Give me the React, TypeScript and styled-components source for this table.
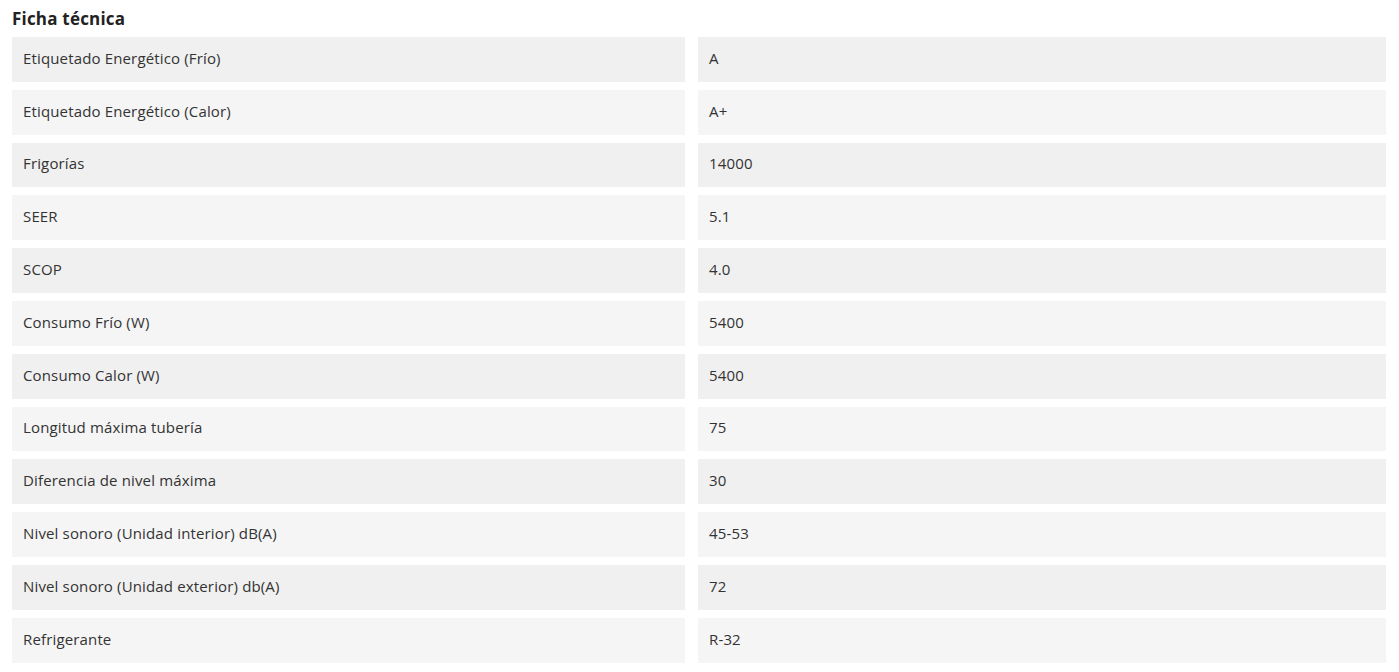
import React from "react";
import styled, { createGlobalStyle } from "styled-components";

const Global = createGlobalStyle`
  html, body { margin: 0; padding: 0; background: #ffffff; }
  body { font-family: "Open Sans", "Liberation Sans", sans-serif; color: #333333; }
`;

const Wrapper = styled.section`
  padding: 8px 13px 0 12px;
`;

const Title = styled.h2`
  margin: 0 0 7px 0;
  font-family: "Open Sans", sans-serif;
  font-weight: 700;
  font-size: 17px;
  letter-spacing: 0.2px;
  line-height: 22px;
  color: #222222;
`;

const Grid = styled.div`
  display: grid;
  grid-template-columns: 673px 688px;
  column-gap: 13px;
  row-gap: 8px;
`;

const Cell = styled.div<{ $alt: boolean }>`
  height: 44.8px;
  box-sizing: border-box;
  display: flex;
  align-items: center;
  padding: 0 11px 3px 11px;
  background: ${(p) => (p.$alt ? "#f5f5f5" : "#f0f0f0")};
  font-size: 15px;
  letter-spacing: 0.15px;
  color: #333333;
  white-space: nowrap;
`;

const rows: [string, string][] = [
  ["Etiquetado Energético (Frío)", "A"],
  ["Etiquetado Energético (Calor)", "A+"],
  ["Frigorías", "14000"],
  ["SEER", "5.1"],
  ["SCOP", "4.0"],
  ["Consumo Frío (W)", "5400"],
  ["Consumo Calor (W)", "5400"],
  ["Longitud máxima tubería", "75"],
  ["Diferencia de nivel máxima", "30"],
  ["Nivel sonoro (Unidad interior) dB(A)", "45-53"],
  ["Nivel sonoro (Unidad exterior) db(A)", "72"],
  ["Refrigerante", "R-32"],
];

export default function App() {
  return (
    <>
      <Global />
      <Wrapper>
        <Title>Ficha técnica</Title>
        <Grid>
          {rows.map(([k, v], i) => (
            <React.Fragment key={k}>
              <Cell $alt={i % 2 === 1}>{k}</Cell>
              <Cell $alt={i % 2 === 1}>{v}</Cell>
            </React.Fragment>
          ))}
        </Grid>
      </Wrapper>
    </>
  );
}
